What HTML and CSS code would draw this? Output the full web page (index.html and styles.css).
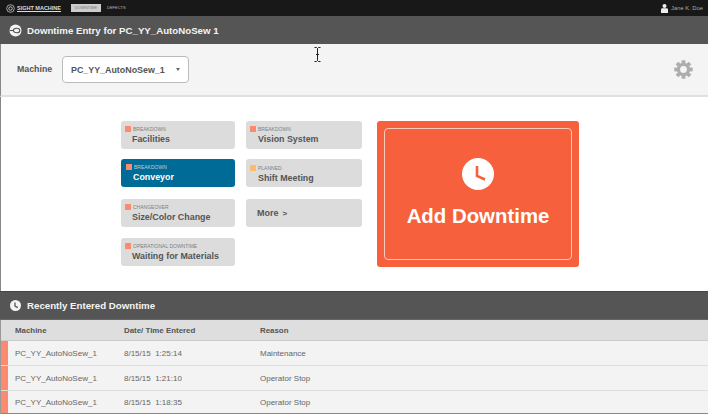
FILE: index.html
```html
<!DOCTYPE html>
<html lang="en">
<head>
    <meta charset="UTF-8">
    <title>Downtime Entry</title>
    <link rel="stylesheet" href="styles.css">
</head>
<body>
    <div class="topbar">
        <div class="logo">
            <svg width="13" height="13" viewBox="0 0 13 13"><circle cx="6.5" cy="6.5" r="5.5" fill="none" stroke="#ddd" stroke-width="1"/><circle cx="6.5" cy="6.5" r="2.5" fill="none" stroke="#ddd" stroke-width="1.2"/></svg>
            <span class="logo-text">SIGHT MACHINE</span>
        </div>
        <span class="nav-item active">DOWNTIME</span>
        <span class="nav-item">DEFECTS</span>
        <div class="user">
            <svg width="7" height="9" viewBox="0 0 7 9"><circle cx="3.5" cy="2" r="2" fill="#eee"/><path d="M0 9V5.5Q0 4.3 1.5 4.3H5.5Q7 4.3 7 5.5V9Z" fill="#eee"/></svg>
            <span>Jane K. Doe</span>
        </div>
    </div>

    <div class="section-head entry-head">
        <svg width="13" height="13" viewBox="0 0 13 13"><circle cx="6.5" cy="6.5" r="6" fill="#f4f4f4"/><ellipse cx="7.6" cy="6.5" rx="3.2" ry="2.3" fill="none" stroke="#555" stroke-width="1.1"/><path d="M0.800 6.500H4.200" stroke="#555" stroke-width="1.100"/></svg>
        <h1>Downtime Entry for PC_YY_AutoNoSew 1</h1>
    </div>

    <div class="machine-bar">
        <label>Machine</label>
        <div class="select">
            <span>PC_YY_AutoNoSew_1</span>
            <i class="caret"></i>
        </div>
        <svg class="gear" width="19" height="19" viewBox="0 0 20 20">
            <circle cx="10" cy="10" r="5.300" fill="none" stroke="#adadad" stroke-width="3.400"/>
            <g fill="#adadad">
                <rect x="8" y="0.300" width="4" height="4"/>
                <rect x="8" y="0.300" width="4" height="4" transform="rotate(45 10 10)"/>
                <rect x="8" y="0.300" width="4" height="4" transform="rotate(90 10 10)"/>
                <rect x="8" y="0.300" width="4" height="4" transform="rotate(135 10 10)"/>
                <rect x="8" y="0.300" width="4" height="4" transform="rotate(180 10 10)"/>
                <rect x="8" y="0.300" width="4" height="4" transform="rotate(225 10 10)"/>
                <rect x="8" y="0.300" width="4" height="4" transform="rotate(270 10 10)"/>
                <rect x="8" y="0.300" width="4" height="4" transform="rotate(315 10 10)"/>
            </g>
        </svg>
    </div>

    <div class="entry">
        <div class="reasons">
            <div class="reason">
                <div class="reason-type"><i class="dot"></i>BREAKDOWN</div>
                <div class="reason-name">Facilities</div>
            </div>
            <div class="reason">
                <div class="reason-type"><i class="dot"></i>BREAKDOWN</div>
                <div class="reason-name">Vision System</div>
            </div>
            <div class="reason selected">
                <div class="reason-type"><i class="dot"></i>BREAKDOWN</div>
                <div class="reason-name">Conveyor</div>
            </div>
            <div class="reason">
                <div class="reason-type"><i class="dot planned"></i>PLANNED</div>
                <div class="reason-name">Shift Meeting</div>
            </div>
            <div class="reason">
                <div class="reason-type"><i class="dot"></i>CHANGEOVER</div>
                <div class="reason-name">Size/Color Change</div>
            </div>
            <div class="reason more">More <span class="more-arrow">&gt;</span></div>
            <div class="reason">
                <div class="reason-type"><i class="dot"></i>OPERATIONAL DOWNTIME</div>
                <div class="reason-name">Waiting for Materials</div>
            </div>
        </div>

        <div class="add-btn">
            <div class="add-inner">
                <svg width="32" height="32" viewBox="0 0 32 32"><circle cx="16" cy="16" r="16" fill="#fff"/><path d="M15 8V18L23 21.500" fill="none" stroke="#f6603c" stroke-width="2.600"/></svg>
                <span>Add Downtime</span>
            </div>
        </div>
    </div>

    <div class="section-head recent-head">
        <svg width="11" height="11" viewBox="0 0 11 11"><circle cx="5.500" cy="5.500" r="5.500" fill="#f4f4f4"/><path d="M5 2.500V6L7.800 7.600" fill="none" stroke="#555" stroke-width="1.300"/></svg>
        <h2>Recently Entered Downtime</h2>
    </div>

    <table>
        <thead>
            <tr>
                <th>Machine</th>
                <th>Date/ Time Entered</th>
                <th>Reason</th>
            </tr>
        </thead>
        <tbody>
            <tr>
                <td>PC_YY_AutoNoSew_1</td>
                <td>8/15/15 &nbsp;1:25:14</td>
                <td>Maintenance</td>
            </tr>
            <tr>
                <td>PC_YY_AutoNoSew_1</td>
                <td>8/15/15 &nbsp;1:21:10</td>
                <td>Operator Stop</td>
            </tr>
            <tr>
                <td>PC_YY_AutoNoSew_1</td>
                <td>8/15/15 &nbsp;1:18:35</td>
                <td>Operator Stop</td>
            </tr>
        </tbody>
    </table>

    <!-- mouse pointer caught in the shot -->
    <svg class="cursor" width="7" height="15" viewBox="0 0 7 15"><path d="M0.500 0.500H2.500L3.500 1.500L4.500 0.500H6.500M3.500 1.500V13.500M0.500 14.500H2.500L3.500 13.500L4.500 14.500H6.500M2 7.500H5" fill="none" stroke="#222" stroke-width="1"/></svg>
</body>
</html>
```

FILE: styles.css
```css
body {
    margin: 0;
    height: 415px;
    overflow: hidden;
    background-color: #fff;
    color: #555;
    font-family: "Liberation Sans", Arial, sans-serif;
}

.topbar {
    display: flex;
    align-items: center;
    height: 16px;
    padding: 0 6px;
    background-color: #181818;
    color: #ddd;
}

.logo {
    display: flex;
    align-items: center;
    gap: 2px;
    width: 65px;
}

.logo svg {
    width: 9px;
    height: 9px;
}

.logo-text {
    font-size: 5.5px;
    font-weight: bold;
    text-decoration: underline;
    white-space: nowrap;
}

.nav-item {
    padding: 2px 0;
    font-size: 4px;
    line-height: 4px;
    color: #bbb;
}

.nav-item.active {
    width: 30px;
    margin-right: 6px;
    text-align: center;
    background-color: #ccc;
    color: #777;
}

.user {
    display: flex;
    align-items: center;
    gap: 3px;
    margin-left: auto;
    margin-right: -1px;
    font-size: 5.8px;
    color: #aaa;
}

.section-head {
    display: flex;
    align-items: center;
    background-color: #555;
    color: #f4f4f4;
}

.entry-head {
    height: 28px;
    gap: 5px;
    padding-left: 9px;
}

h1 {
    margin: 0;
    font-size: 9.700px;
    font-weight: bold;
}

.machine-bar {
    display: flex;
    align-items: center;
    height: 51px;
    padding: 0 15px 0 17px;
    background-color: #f4f4f4;
    border-bottom: 2px solid #e0e0e0;
    border-left: 1px solid #888;
}

.machine-bar label {
    width: 45px;
    margin-left: -1px;
    margin-top: -1px;
    font-size: 8.800px;
    font-weight: bold;
}

.select {
    display: flex;
    align-items: center;
    box-sizing: border-box;
    width: 127px;
    height: 27px;
    padding: 0 8px;
    background-color: #fff;
    border: 1px solid #bbb;
    border-radius: 4px;
    font-size: 8.900px;
    font-weight: bold;
}

.caret {
    margin-left: auto;
    border-top: 3px solid #666;
    border-left: 2px solid transparent;
    border-right: 2px solid transparent;
}

.gear {
    margin-left: auto;
}

.entry {
    display: flex;
    align-items: flex-start;
    box-sizing: border-box;
    height: 194px;
    padding: 24px 0 0 120px;
    border-left: 1px solid #888;
}

.reasons {
    display: grid;
    grid-template-columns: 114px 116px;
    grid-template-rows: 28px 30px 29px 28px;
    column-gap: 11px;
    row-gap: 10px;
    width: 241px;
}

.reason {
    box-sizing: border-box;
    height: 28px;
    padding: 4px 0 0 4px;
    background-color: #dcdcdc;
    border-radius: 3px;
}

.reason-type {
    display: flex;
    align-items: center;
    gap: 2px;
    height: 7px;
    font-size: 5px;
    color: #808080;
    white-space: nowrap;
}

.dot {
    width: 6px;
    height: 6px;
    background-color: #fb8a6f;
}

.dot.planned {
    background-color: #fcbc6c;
}

.reason-name {
    margin: 2px 0 0 7px;
    font-size: 8.900px;
    line-height: 11px;
    font-weight: bold;
    white-space: nowrap;
}

.reason:nth-child(even) .reason-name {
    margin-left: 8px;
}

.reason:nth-child(4) {
    padding-top: 5px;
}

.reason.selected {
    padding-left: 5px;
    background-color: #006b96;
    color: #fff;
}

.selected .reason-type {
    color: #b5d3e0;
}

.reason.more {
    display: flex;
    align-items: center;
    padding: 0 0 0 11px;
    font-size: 9px;
    font-weight: bold;
}

.more-arrow {
    margin-left: 4px;
    font-size: 8px;
}

.add-btn {
    box-sizing: border-box;
    width: 202px;
    height: 146px;
    margin-left: 15px;
    padding: 7px;
    background-color: #f6603c;
    border-radius: 3px;
}

.add-inner {
    display: flex;
    flex-direction: column;
    align-items: center;
    box-sizing: border-box;
    height: 132px;
    padding-top: 29px;
    border: 1px solid #fdc9bb;
    border-radius: 4px;
    color: #fff;
}

.add-inner span {
    margin-top: 15px;
    font-size: 20.400px;
    font-weight: bold;
}

.recent-head {
    box-sizing: border-box;
    height: 29px;
    gap: 6px;
    padding-left: 10px;
    border-top: 1px solid #444;
    border-bottom: 1px solid #666;
}

h2 {
    margin: 0;
    font-size: 9.700px;
    font-weight: bold;
}

table {
    box-sizing: border-box;
    width: 100%;
    border-left: 1px solid #999;
    border-spacing: 0;
    table-layout: fixed;
    font-size: 8px;
}

th, td {
    box-sizing: border-box;
    padding: 0;
    text-align: left;
}

th {
    height: 21px;
    font-size: 7.900px;
    background-color: #dedede;
    border-bottom: 1px solid #ccc;
    color: #555;
}

th:nth-child(1) {
    width: 123px;
    padding-left: 14px;
}

th:nth-child(2) {
    width: 136px;
}

td {
    height: 25px;
    background-color: #f3f3f3;
    border-bottom: 1px solid #dedede;
    color: #666;
}

td:first-child {
    padding-left: 14px;
    box-shadow: inset 7px 0 #fb8a6f;
}

tr:last-child td {
    height: 23px;
    border-bottom: 1px solid #888;
}

.cursor {
    position: absolute;
    left: 314px;
    top: 47px;
}
```
